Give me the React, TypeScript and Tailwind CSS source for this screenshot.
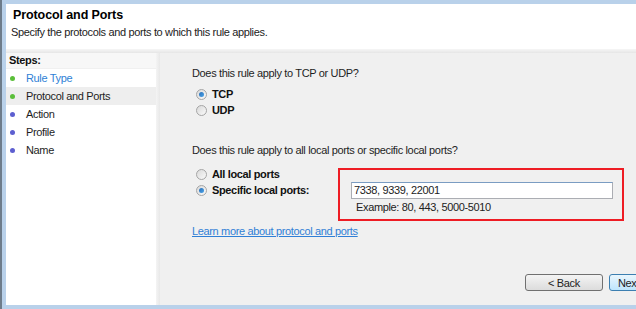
import React from "react";

const font = { fontFamily: '"Liberation Sans", Arial, sans-serif' };

function Radio({ checked }: { checked?: boolean }) {
  return (
    <span className="relative inline-flex h-[11px] w-[11px] shrink-0 items-center justify-center rounded-full border border-[#a5a5a5] bg-gradient-to-br from-[#d9d9d9] to-[#fafafa]">
      {checked && <span className="h-[5px] w-[5px] rounded-full bg-gradient-to-br from-[#2a6fb8] to-[#4ba3e8]" />}
    </span>
  );
}

const steps = [
  { label: "Rule Type", done: true, link: true },
  { label: "Protocol and Ports", done: true, active: true },
  { label: "Action" },
  { label: "Profile" },
  { label: "Name" },
];

export default function App() {
  return (
    <div className="flex h-[309px] w-[636px] overflow-hidden bg-[#6e7c8a] text-[11px] tracking-[-0.35px] text-[#1e1e1e]" style={font}>
      <div className="ml-[2px] flex flex-1 flex-col bg-[#b9d1ea] pl-[4px] pt-[4px] pb-[4px]">
        {/* header */}
        <div className="h-[45px] shrink-0 bg-white pl-[7px] pt-[3px]">
          <h1 className="text-[12.5px] font-bold leading-[17px] tracking-[-0.1px] text-black">Protocol and Ports</h1>
          <p className="mt-[1px] -ml-[2px] leading-[14px] text-[#222]">Specify the protocols and ports to which this rule applies.</p>
        </div>
        <div className="h-[4px] shrink-0 bg-gradient-to-b from-[#f6f6f6] to-[#e6e6e6]" />
        <div className="flex flex-1 bg-[#f0f0f0]">
          {/* sidebar */}
          <div className="w-[150px] shrink-0 bg-white">
            <div className="h-[16px] border-b border-[#f0f0f0] bg-[#f7f7f7] pl-[3px] font-bold leading-[15px] text-[#111]">Steps:</div>
            <ul>
              {steps.map((s) => (
                <li key={s.label} className={`flex h-[18px] items-center ${s.active ? "bg-[#eeeeee]" : ""}`}>
                  <span className={`ml-[4px] mr-[11px] h-[5px] w-[5px] rounded-full ${s.done ? "bg-[#5bbf3a]" : "bg-[#5d5fd0]"}`} />
                  <span className={s.link ? "text-[#2f7fd6]" : "text-[#1e1e1e]"}>{s.label}</span>
                </li>
              ))}
            </ul>
          </div>
          <div className="w-[4px] shrink-0 bg-gradient-to-r from-[#f4f4f4] to-[#e8e8e8]" />
          {/* main */}
          <div className="flex flex-1 flex-col pl-[32px] pt-[13px]">
            <p className="leading-[14px]">Does this rule apply to TCP or UDP?</p>
            <div className="mt-[8px] flex flex-col gap-[3px] pl-[4px]">
              <label className="flex h-[13px] items-center gap-[5px] font-bold text-[#111]"><Radio checked />TCP</label>
              <label className="flex h-[13px] items-center gap-[5px] font-bold text-[#111]"><Radio />UDP</label>
            </div>
            <p className="mt-[26px] leading-[14px]">Does this rule apply to all local ports or specific local ports?</p>
            <div className="flex">
              <div className="mt-[11px] flex flex-col gap-[3px] pl-[4px]">
                <label className="flex h-[13px] items-center gap-[5px] font-bold text-[#111]"><Radio />All local ports</label>
                <label className="flex h-[13px] items-center gap-[5px] font-bold text-[#111]"><Radio checked />Specific local ports:</label>
              </div>
              <div className="ml-auto mr-[12px] mt-[11px] h-[53px] w-[286px] border-2 border-[#ee1c24] pl-[11px] pt-[12px]">
                <div className="h-[17px] w-[262px] border border-[#abadb3] border-t-[#7a9cc2] bg-white pl-[2px] leading-[15px] text-[#222]">7338, 9339, 22001</div>
                <p className="mt-[1px] pl-[5px] leading-[14px] text-[#222]">Example: 80, 443, 5000-5010</p>
              </div>
            </div>
            <a className="mt-[3px] self-start leading-[14px] text-[#2f7fd6] underline" href="#">Learn more about protocol and ports</a>
            <div className="mt-auto mb-[14px] flex justify-end gap-[6px]">
              <button className="h-[17px] w-[78px] rounded-[3px] border border-[#707070] bg-gradient-to-b from-[#f4f4f4] to-[#dcdcdc] leading-[14px] text-[#222]">&lt; Back</button>
              <button className="-mr-[51px] h-[17px] w-[78px] rounded-[3px] border border-[#3c7fb1] bg-gradient-to-b from-[#eaf6fd] to-[#bee6fd] pl-[8px] text-left leading-[14px] text-[#222]">Next &gt;</button>
            </div>
          </div>
        </div>
      </div>
    </div>
  );
}
